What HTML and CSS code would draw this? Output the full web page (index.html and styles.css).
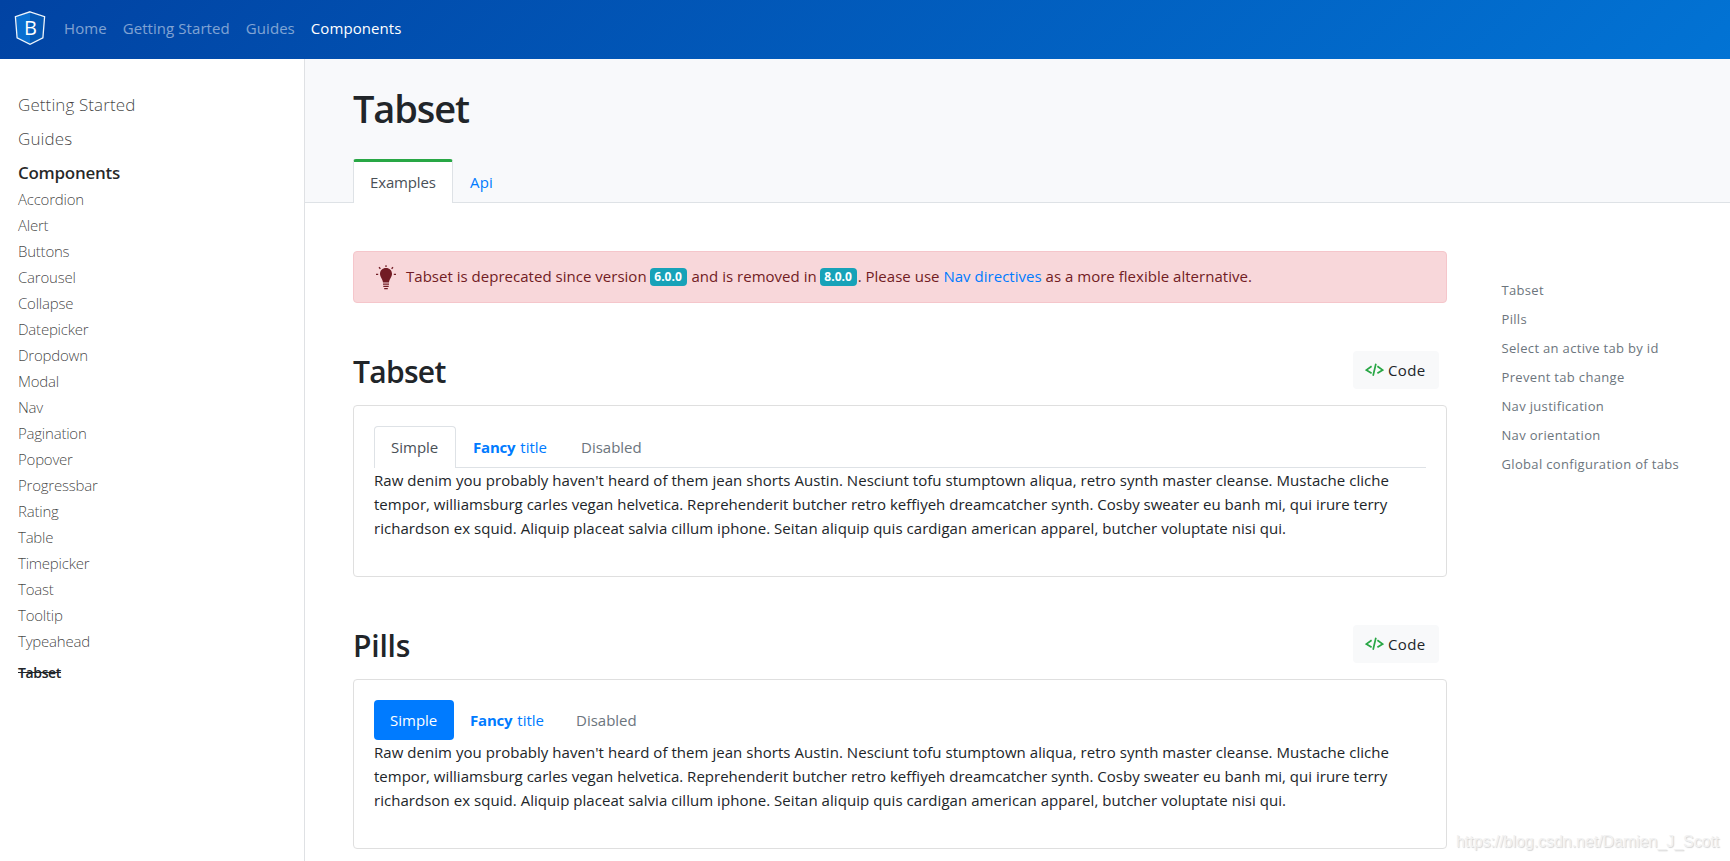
FILE: index.html
```html
<!DOCTYPE html>
<html lang="en">
<head>
<meta charset="utf-8">
<title>Tabset</title>
<link rel="stylesheet" href="styles.css">
</head>
<body>
<header class="navbar">
  <svg class="logo" width="32" height="36" viewBox="0 0 32 36">
    <path d="M16 2 L2 6.5 L3.5 28 L16 34.5 Z" fill="#0a6fd0"/>
    <path d="M16 2 L30 6.5 L28.5 28 L16 34.5 Z" fill="#0558b4"/>
    <path d="M16 1.8 L30.6 6.6 L28.9 27.8 L16 34.3 L3.1 27.8 L1.4 6.6 Z" fill="none" stroke="#eef4fb" stroke-width="1.3"/>
    <text x="16.4" y="24.6" text-anchor="middle" class="logo-letter">B</text>
  </svg>
  <nav class="nav-links">
    <a>Home</a><a>Getting Started</a><a>Guides</a><a class="active">Components</a>
  </nav>
</header>
<div class="layout">
  <aside class="sidebar">
    <a class="group">Getting Started</a>
    <a class="group">Guides</a>
    <a class="group current">Components</a>
    <div class="items">
      <a>Accordion</a><a>Alert</a><a>Buttons</a><a>Carousel</a><a>Collapse</a><a>Datepicker</a><a>Dropdown</a><a>Modal</a><a>Nav</a><a>Pagination</a><a>Popover</a><a>Progressbar</a><a>Rating</a><a>Table</a><a>Timepicker</a><a>Toast</a><a>Tooltip</a><a>Typeahead</a><a class="deprecated">Tabset</a>
    </div>
  </aside>
  <main class="main">
    <div class="page-head">
      <h1>Tabset</h1>
      <div class="head-tabs"><a class="head-tab active">Examples</a><a class="head-tab">Api</a></div>
    </div>
    <div class="body">
      <div class="content">
        <div class="alert">
          <svg class="bulb" width="20" height="25" viewBox="0 0 20 25">
            <g stroke="#721c24" stroke-width="1.3" fill="none">
              <path d="M10 .2V2M3 2.2L4.4 3.7M17 2.2L15.6 3.7M0 9.3H2.2M17.8 9.3H20M7 19.2H13M7.3 21.3H12.7M8.2 23.6H11.8"/>
            </g>
            <path d="M10 3C6.4 3 4 5.6 4 8.8C4 12.2 6.6 13.6 7 17.6H13C13.4 13.6 16 12.2 16 8.8C16 5.6 13.6 3 10 3Z" fill="#721c24"/>
          </svg>
          <div class="alert-text">Tabset is deprecated since version <span class="badge">6.0.0</span> and is removed in <span class="badge">8.0.0</span>. Please use <a class="link">Nav directives</a> as a more flexible alternative.</div>
        </div>

        <section class="demo">
          <div class="demo-head"><h2>Tabset</h2><a class="code-btn"><svg width="19" height="14" viewBox="0 0 19 14" fill="none" stroke="#28a745" stroke-width="1.7"><path d="M6.6 3.2L1.3 7L6.6 10.2M12.4 3.2L17.7 7L12.4 10.2M10.9 .8L8.1 12.8"/></svg>Code</a></div>
          <div class="card">
            <div class="tabs"><a class="tab active">Simple</a><a class="tab"><b>Fancy</b> title</a><a class="tab disabled">Disabled</a></div>
            <p>Raw denim you probably haven't heard of them jean shorts Austin. Nesciunt tofu stumptown aliqua, retro synth master cleanse. Mustache cliche<br><span class="snug">tempor, williamsburg carles vegan helvetica. Reprehenderit butcher retro keffiyeh dreamcatcher synth. Cosby sweater eu banh mi, qui irure terry</span><br>richardson ex squid. Aliquip placeat salvia cillum iphone. Seitan aliquip quis cardigan american apparel, butcher voluptate nisi qui.</p>
          </div>
        </section>

        <section class="demo">
          <div class="demo-head"><h2 class="pills-title">Pills</h2><a class="code-btn"><svg width="19" height="14" viewBox="0 0 19 14" fill="none" stroke="#28a745" stroke-width="1.7"><path d="M6.6 3.2L1.3 7L6.6 10.2M12.4 3.2L17.7 7L12.4 10.2M10.9 .8L8.1 12.8"/></svg>Code</a></div>
          <div class="card">
            <div class="pills"><a class="pill active">Simple</a><a class="pill"><b>Fancy</b> title</a><a class="pill disabled">Disabled</a></div>
            <p>Raw denim you probably haven't heard of them jean shorts Austin. Nesciunt tofu stumptown aliqua, retro synth master cleanse. Mustache cliche<br><span class="snug">tempor, williamsburg carles vegan helvetica. Reprehenderit butcher retro keffiyeh dreamcatcher synth. Cosby sweater eu banh mi, qui irure terry</span><br>richardson ex squid. Aliquip placeat salvia cillum iphone. Seitan aliquip quis cardigan american apparel, butcher voluptate nisi qui.</p>
          </div>
        </section>
      </div>
      <nav class="toc">
        <a>Tabset</a><a>Pills</a><a>Select an active tab by id</a><a>Prevent tab change</a><a>Nav justification</a><a>Nav orientation</a><a>Global configuration of tabs</a>
      </nav>
    </div>
  </main>
</div>
<div class="watermark">https://blog.csdn.net/Damien_J_Scott</div>
</body>
</html>
```
FILE: styles.css
```css
* { box-sizing: border-box; }
body {
  margin: 0;
  height: 861px;
  overflow: hidden;
  font: 15px/24px "Open Sans", "Noto Sans", sans-serif;
  color: #212529;
  background: #fff;
  display: flex;
  flex-direction: column;
}
a { text-decoration: none; color: inherit; white-space: nowrap; }
h1, h2, p { margin: 0; }

.navbar {
  flex: none;
  height: 59px;
  display: flex;
  align-items: center;
  padding-left: 14px;
  background: linear-gradient(135deg, #0143a3, #0273d4);
}
.logo { display: block; margin-top: -4px; }
.logo-letter { font: 20px "Open Sans", sans-serif; fill: #fff; }
.nav-links { display: flex; gap: 16px; margin: -3px 0 0 18px; letter-spacing: .07px; color: rgba(255, 255, 255, .5); }
.nav-links .active { color: #fff; }

.layout { flex: 1; display: flex; min-height: 0; }
.sidebar {
  flex: none;
  width: 305px;
  border-right: 1px solid #dfe1e4;
  padding: 29px 0 0 18px;
  display: flex;
  flex-direction: column;
  color: rgba(0, 0, 0, .75);
  font-weight: 300;
}
.group { font-size: 17px; line-height: 34px; letter-spacing: .1px; }
.group.current { font-weight: 600; letter-spacing: -.27px; color: rgba(0, 0, 0, .85); }
.items { display: flex; flex-direction: column; margin-top: -4px; letter-spacing: -.22px; line-height: 26px; }
.items .deprecated {
  align-self: flex-start;
  margin-top: 6px;
  font-size: 14px;
  font-weight: 600;
  letter-spacing: -.36px;
  text-decoration: line-through;
  color: #212529;
}

.main { flex: 1; min-width: 0; }
.page-head {
  height: 144px;
  padding: 25px 0 0 48px;
  background: #f8f9fb;
  border-bottom: 1px solid #dee2e6;
}
h1 { font-size: 38px; line-height: 48px; font-weight: 600; letter-spacing: -1.1px; }
.head-tabs { display: flex; margin-top: 27px; }
.head-tab { height: 44px; padding: 11px 17px 0; color: #007bff; letter-spacing: .15px; }
.head-tab.active {
  width: 100px;
  padding: 8px 16px 0;
  border: 1px solid #dee2e6;
  border-top: 3px solid #28a745;
  border-bottom: 0;
  border-radius: 3px 3px 0 0;
  background: #fff;
  color: #495057;
  letter-spacing: -.15px;
}

.body { display: flex; padding: 48px 0 0 48px; }
.content { width: 1094px; }
.alert {
  height: 52px;
  display: flex;
  align-items: center;
  padding-left: 22px;
  background: #f8d7da;
  border: 1px solid #f5c6cb;
  border-radius: 4px;
  color: #721c24;
}
.bulb { margin-top: 1px; }
.alert-text { height: 24px; margin: -3px 0 0 10px; letter-spacing: .02px; white-space: nowrap; }
.badge {
  display: inline-block;
  width: 37px;
  height: 18px;
  line-height: 18px;
  text-align: center;
  vertical-align: 1px;
  margin-left: -1px;
  margin-right: 1px;
  font-size: 12px;
  font-weight: 700;
  color: #fff;
  background: #17a2b8;
  border-radius: 4px;
}
.link { color: #007bff; }

.demo { margin-top: 48px; }
.demo-head { height: 38px; display: flex; justify-content: space-between; padding-right: 8px; }
h2 { font-size: 30px; line-height: 41px; font-weight: 600; letter-spacing: -.7px; }
.pills-title { letter-spacing: -.2px; }
.code-btn {
  width: 86px;
  display: flex;
  align-items: center;
  gap: 4px;
  padding-left: 12px;
  background: #f8f9fa;
  border-radius: 4px;
  letter-spacing: .4px;
}
.card {
  margin-top: 16px;
  padding: 20px 20px 36px;
  border: 1px solid #dfdfdf;
  border-radius: 4px;
}
.card p { letter-spacing: .045px; white-space: nowrap; }
.card .snug { letter-spacing: .01px; }
.tabs { display: flex; height: 42px; border-bottom: 1px solid #dee2e6; }
.tab { height: 42px; padding: 9px 17px; color: #007bff; }
.tab.active {
  padding: 8px 16px;
  width: 82px;
  border: 1px solid #dee2e6;
  border-bottom: 0;
  border-radius: 4px 4px 0 0;
  background: #fff;
  color: #495057;
}
.tab b, .pill b { letter-spacing: -.2px; margin-right: 1px; }
.pills { display: flex; height: 40px; }
.pill { padding: 8px 16px; color: #007bff; border-radius: 4px; }
.pill.active { background: #007bff; color: #fff; width: 80px; }
.tab.disabled, .pill.disabled { color: #6c757d; }

.toc {
  display: flex;
  flex-direction: column;
  margin: 25px 0 0 54.5px;
  font-size: 13px;
  line-height: 29px;
  letter-spacing: .33px;
  color: #6c757d;
}
.watermark {
  position: absolute;
  left: 1456px;
  top: 832px;
  font: 16px/20px "Liberation Sans", sans-serif;
  letter-spacing: -.05px;
  color: #f2f2f2;
  text-shadow: 1px 1px 1px #d4d4d4;
}
```
